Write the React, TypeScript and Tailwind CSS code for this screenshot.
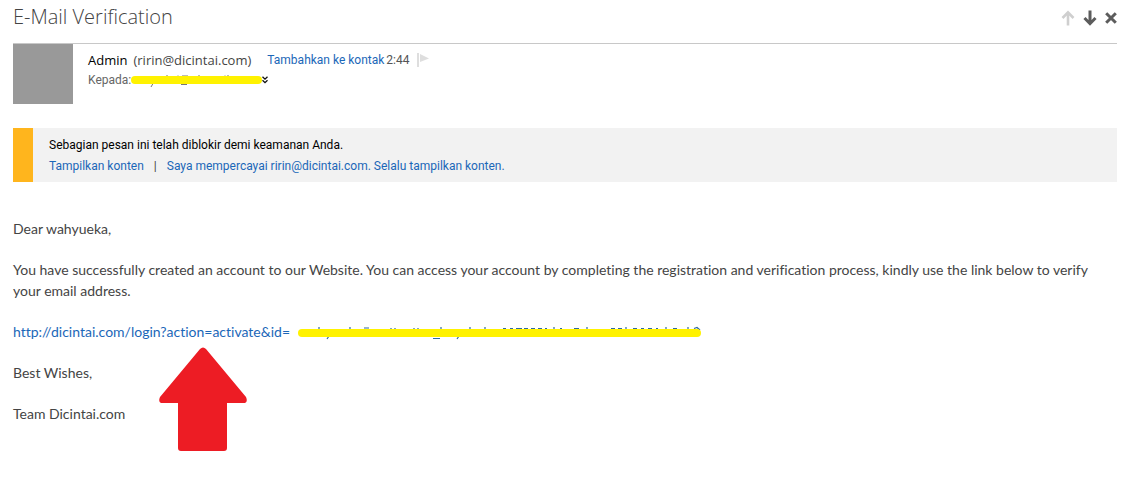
import React from "react";

function ArrowUp() {
  return (
    <svg width="14" height="16" viewBox="0 0 14 16" fill="none" stroke="#cfcfcf" strokeWidth="2.600">
      <path d="M7 15.500V2M1.500 8L7 2.300L12.500 8" />
    </svg>
  );
}

function ArrowDown() {
  return (
    <svg width="14" height="16" viewBox="0 0 14 16" fill="none" stroke="#5c5c5c" strokeWidth="3">
      <path d="M7 0.500V14M1.500 8L7 13.700L12.500 8" />
    </svg>
  );
}

function Close() {
  return (
    <svg width="12" height="12" viewBox="0 0 12 12" fill="none" stroke="#5c5c5c" strokeWidth="3">
      <path d="M1.200 1.200L10.800 10.800M10.800 1.200L1.200 10.800" />
    </svg>
  );
}

function Flag() {
  return (
    <svg width="12" height="14" viewBox="0 0 12 14">
      <path d="M0 0H2V14H0Z" fill="#dedede" />
      <path d="M3 1L12 5.500L3 9Z" fill="#dedede" />
    </svg>
  );
}

function RecipientMask() {
  return (
    <svg width="131" height="14" viewBox="0 0 131 14" className="shrink-0">
      <path d="M22 10.500L20 14M36 3.500V2M47 3.500V2.500M68 3.500V2M94 3.500V2.500M97 3.500V2M51 3H57M50 11.500H56" stroke="#777" fill="none" />
      <rect x="0" y="3" width="131" height="8" rx="4" fill="#fff200" />
    </svg>
  );
}

function LinkMask() {
  return (
    <svg width="403" height="16" viewBox="0 0 403 16" className="ml-2 shrink-0">
      <g stroke="#2e6a9e" strokeWidth="1.200" fill="none">
        <path d="M21 5V3M52 5V3M66 4H71M93 5V4M97 5V4M116 5V4M120 5V4M143 5V3M172 5V3M187 5V3" />
        <path d="M31 12L29 15M161 12L159 15M135 14.500H142" />
        <path d="M205 4.500H208M212 4.500H215M218 4.500H224M226 4.500H230M233 4.500H237M240 4.500H244M247 4.500H249M256 5V3M262 4.500H264M276 4.500H281M289 5V3M313 4.500H317M320 4.500H324M328 5V3M335 4.500H339M343 4.500H346M350 4.500H354M358 4.500H360M368 5V3M375 4.500H379M390 5V3M396 4.500L399 3.500L402 6" />
      </g>
      <rect x="0" y="5" width="403" height="8" rx="4" fill="#fff200" />
    </svg>
  );
}

export default function App() {
  return (
    <main className="bg-white pr-2 pb-14 pl-[13px] font-['Open_Sans','Noto_Sans',sans-serif] text-[#444]">
      <header className="flex h-[43px] items-start justify-between">
        <h1 className="pt-0.5 text-[20px] leading-[30px] font-light text-[#444]">E-Mail Verification</h1>
        <div className="flex items-center gap-2 pt-[10px]">
          <button type="button" aria-label="Previous message"><ArrowUp /></button>
          <button type="button" aria-label="Next message"><ArrowDown /></button>
          <button type="button" aria-label="Close"><Close /></button>
        </div>
      </header>
      <section className="flex gap-[15px] border-t border-[#c8c8c8]">
        <div className="h-[60px] w-[60px] bg-[#999]" />
        <div className="pt-1.5 font-['Roboto','Open_Sans',sans-serif]">
          <div className="flex h-5 items-center text-[12px] leading-5">
            <span className="font-['Open_Sans',sans-serif] text-[13px] text-black">Admin</span>
            <span className="ml-1.5 font-['Open_Sans',sans-serif] text-[13px]">(ririn@dicintai.com)</span>
            <a href="#contact" className="ml-4 text-[#1b67b8]">Tambahkan ke kontak</a>
            <time className="ml-0.5 text-[#555]">2:44</time>
            <button type="button" aria-label="Flag message" className="ml-2"><Flag /></button>
          </div>
          <div className="flex h-5 items-center text-[12px] text-[#666]">
            <span>Kepada:</span>
            <RecipientMask />
            <button type="button" aria-label="Show details">
              <svg width="6" height="8" viewBox="0 0 6 8" fill="none" stroke="#111" strokeWidth="1.300">
                <path d="M0.500 0.800L3 3.200L5.500 0.800M0.500 4.300L3 6.700L5.500 4.300" />
              </svg>
            </button>
          </div>
        </div>
      </section>
      <section className="mt-6 border-l-20 border-[#ffb51d] bg-[#f2f2f2] px-4 pt-[7px] pb-[5px] font-['Roboto','Open_Sans',sans-serif] text-[12px] leading-[21px]">
        <p className="text-black">Sebagian pesan ini telah diblokir demi keamanan Anda.</p>
        <p className="flex text-[#1b67b8]">
          <a href="#show">Tampilkan konten</a>
          <span className="mx-[10px] text-[#444]">|</span>
          <a href="#trust">Saya mempercayai ririn@dicintai.com. Selalu tampilkan konten.</a>
        </p>
      </section>
      <article className="flex flex-col gap-5 pt-9 font-['Lato','Open_Sans',sans-serif] text-[14px] leading-[21px] [font-variant-ligatures:none]">
        <p>Dear wahyueka,</p>
        <p>
          You have successfully created an account to our Website. You can access your account by completing the
          registration and verification process, kindly use the link below to verify your email address.
        </p>
        <div className="relative flex items-center">
          <a href="#activate" className="text-[#1b67b8]">http://dicintai.com/login?action=activate&amp;id=</a>
          <LinkMask />
          <svg className="absolute top-[26px] left-[146px]" width="88" height="104" viewBox="0 0 88 104">
            <path d="M41 2Q44 -1 47 2L87 50Q89 55 86 56H68V101Q68 104 65 104H22Q19 104 19 101V56H2Q-1 55 1 50Z" fill="#ed1c24" />
          </svg>
        </div>
        <p>Best Wishes,</p>
        <p>Team Dicintai.com</p>
      </article>
    </main>
  );
}
